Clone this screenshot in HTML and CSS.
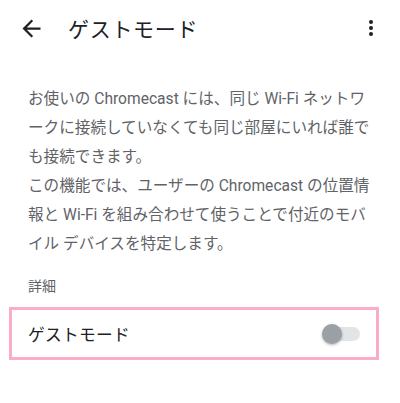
FILE: index.html
```html
<!DOCTYPE html>
<html lang="ja">
<head>
    <meta charset="UTF-8">
    <meta name="viewport" content="width=device-width, initial-scale=1.0">
    <title>ゲストモード</title>
    <link rel="stylesheet" href="styles.css">
</head>
<body>
    <header class="app-bar">
        <button class="icon-btn back" aria-label="戻る">
            <svg viewBox="0 0 24 24" width="27" height="27"><path d="M20 11H7.83l5.59-5.59L12 4l-8 8 8 8 1.41-1.41L7.83 13H20v-2z"/></svg>
        </button>
        <h1 class="title">ゲストモード</h1>
        <button class="icon-btn menu" aria-label="その他">
            <svg viewBox="0 0 24 24" width="24" height="24"><circle cx="12" cy="6" r="2"/><circle cx="12" cy="12" r="2"/><circle cx="12" cy="18" r="2"/></svg>
        </button>
    </header>

    <main class="content">
        <p class="desc">お使いの Chromecast には、同じ Wi-Fi ネットワークに接続していなくても同じ部屋にいれば誰でも接続できます。<br>この機能では、ユーザーの Chromecast の位置情報と Wi-Fi を組み合わせて使うことで付近のモバイル デバイスを特定します。</p>

        <div class="section-label">詳細</div>

        <div class="setting-row">
            <span class="setting-name">ゲストモード</span>
            <span class="switch">
                <span class="track"></span>
                <span class="thumb"></span>
            </span>
        </div>
    </main>
</body>
</html>
```

FILE: styles.css
```css
* {
    box-sizing: border-box;
}

body {
    margin: 0;
    background: #fff;
    font-family: Roboto, "Noto Sans CJK JP", sans-serif;
    color: #202124;
}

.app-bar {
    display: flex;
    align-items: center;
    height: 56px;
    padding: 0 10px 0 18px;
}

.icon-btn {
    display: flex;
    align-items: center;
    justify-content: center;
    padding: 0;
    border: none;
    background: none;
}

.icon-btn svg {
    fill: #202124;
}

.back {
    width: 27px;
    height: 27px;
}

.title {
    flex: 1;
    margin: 0 0 0 23px;
    font-size: 21px;
    font-weight: 400;
    letter-spacing: 0.7px;
}

.menu {
    width: 24px;
    height: 24px;
    margin-right: 7px;
}

.content {
    padding: 29px 0 0;
}

.desc {
    margin: 0;
    padding: 0 28px;
    font-size: 15.6px;
    line-height: 29px;
    color: #5f6368;
}

.section-label {
    margin: 17px 28px 0;
    font-size: 14px;
    line-height: 20px;
    color: #5f6368;
}

.setting-row {
    display: flex;
    align-items: center;
    justify-content: space-between;
    height: 53px;
    margin: 11px 21px 0 9px;
    padding: 0 16px 0 16px;
    border: 3px solid #fbadc8;
}

.setting-name {
    font-size: 16.7px;
    letter-spacing: 0.3px;
    color: #202124;
}

.switch {
    position: relative;
    width: 38px;
    height: 20px;
}

.track {
    position: absolute;
    left: 4px;
    right: 0;
    top: 3px;
    height: 14px;
    border-radius: 7px;
    background: #e3e4e6;
}

.thumb {
    position: absolute;
    left: 0;
    top: 0;
    width: 20px;
    height: 20px;
    border-radius: 50%;
    background: #9aa0a6;
    box-shadow: 0 1px 3px rgba(0, 0, 0, 0.3);
}
```
